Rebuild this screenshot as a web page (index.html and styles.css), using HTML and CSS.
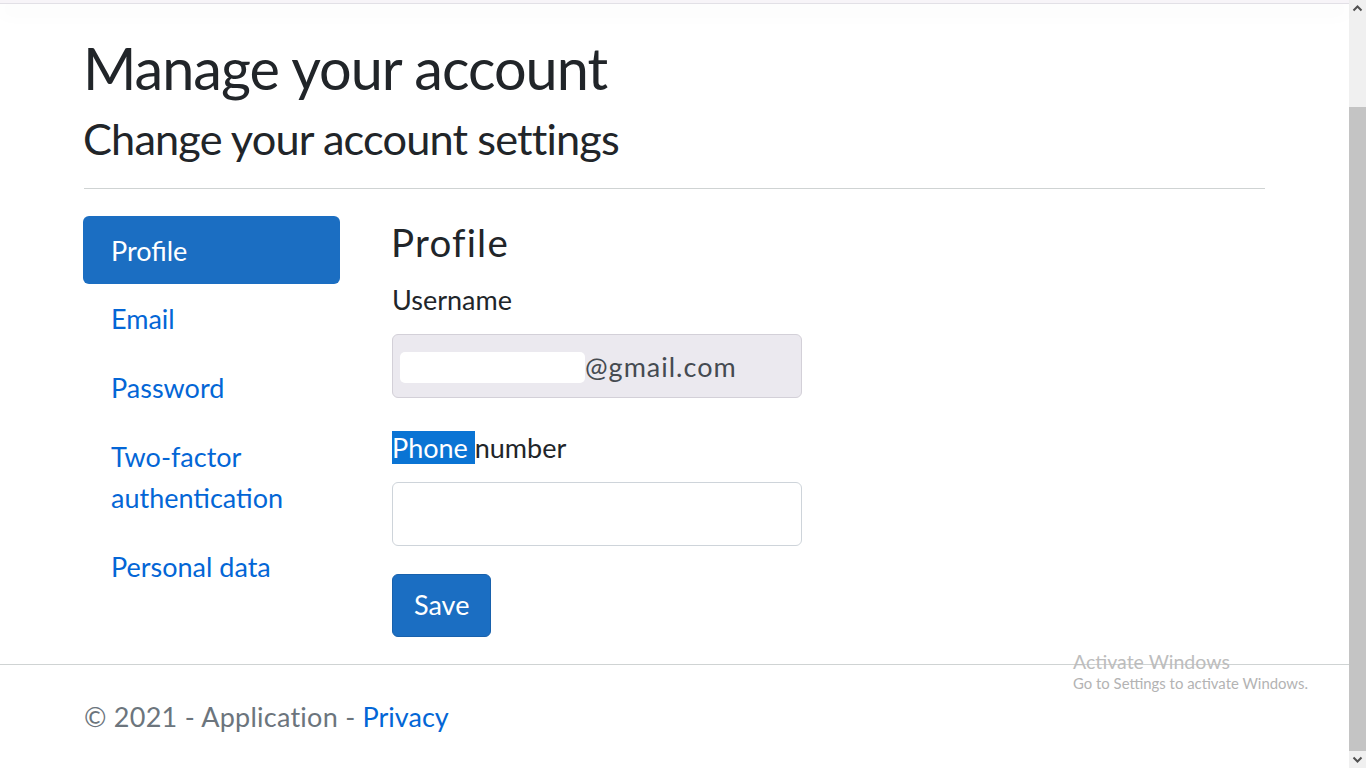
FILE: index.html
```html
<!DOCTYPE html>
<html lang="en">
<head>
<meta charset="utf-8">
<title>Manage your account</title>
<link rel="stylesheet" href="styles.css">
</head>
<body>
<div class="screen">
  <div class="page">
    <div class="nav-edge"></div>
    <main class="container">
      <h1 class="title">Manage your account</h1>
      <h3 class="subtitle">Change your account settings</h3>
      <hr class="rule">
      <div class="row">
        <nav class="side">
          <a class="pill active" href="#">Profile</a>
          <a class="pill" href="#">Email</a>
          <a class="pill" href="#">Password</a>
          <a class="pill" href="#">Two-factor authentication</a>
          <a class="pill" href="#">Personal data</a>
        </nav>
        <section class="content">
          <h4 class="section-title">Profile</h4>
          <form class="form">
            <div class="group">
              <label class="label">Username</label>
              <div class="input disabled"><span class="redact"></span><span class="value">@gmail.com</span></div>
            </div>
            <div class="group">
              <label class="label"><span class="sel">Phone </span>number</label>
              <div class="input"></div>
            </div>
            <button class="btn" type="button">Save</button>
          </form>
        </section>
      </div>
    </main>
    <footer class="footer">
      <div class="footer-inner">© 2021 - Application - <a class="footer-link" href="#">Privacy</a></div>
    </footer>
    <div class="watermark">
      <div class="wm-title">Activate Windows</div>
      <div class="wm-sub">Go to Settings to activate Windows.</div>
    </div>
  </div>
  <div class="scrollbar">
    <div class="sb-arrow">
      <svg width="17" height="17" viewBox="0 0 17 17"><polyline points="4.5,10.5 8.5,6.5 12.5,10.5" fill="none" stroke="#505050" stroke-width="2"/></svg>
    </div>
    <div class="sb-track"></div>
    <div class="sb-thumb"></div>
    <div class="sb-arrow">
      <svg width="17" height="17" viewBox="0 0 17 17"><polyline points="4.5,6.5 8.5,10.5 12.5,6.5" fill="none" stroke="#505050" stroke-width="2"/></svg>
    </div>
  </div>
</div>
</body>
</html>
```

FILE: styles.css
```css
* { box-sizing: border-box; }
html, body { margin: 0; padding: 0; }
body {
  font-family: Lato, "Open Sans", sans-serif;
  font-size: 27px;
  line-height: 1.5;
  color: #212529;
  background: #fff;
  width: 1366px;
  height: 768px;
  overflow: hidden;
}
.screen { display: flex; height: 768px; }
.page {
  width: 1349px;
  height: 768px;
  position: relative;
  display: flex;
  flex-direction: column;
}
.nav-edge {
  height: 4px;
  background: #f7f4f8;
  border-bottom: 1px solid #e2e0e6;
  box-shadow: 0 7px 20px rgba(40, 0, 40, 0.07);
}
.container { margin-left: 84px; width: 1181px; }
.title {
  font-size: 57.6px;
  line-height: 69px;
  font-weight: 400;
  letter-spacing: -1px;
  margin: 29px 0 0 -1px;
}
.subtitle {
  font-size: 43.3px;
  line-height: 52px;
  font-weight: 400;
  letter-spacing: -0.85px;
  margin: 10px 0 0 -1px;
}
.rule {
  margin: 24px 0 0;
  border: 0;
  border-top: 1px solid #cfd3d3;
  height: 0;
}
.row { display: flex; gap: 52px; margin-top: 27px; }
.side { width: 257px; margin-left: -1px; display: flex; flex-direction: column; }
.pill {
  display: block;
  padding: 14px 27px 14px 28px;
  line-height: 41px;
  color: #0366d6;
  text-decoration: none;
  border-radius: 6px;
}
.pill.active { background: #1b6ec2; color: #fff; height: 68px; }
.content { width: 410px; }
.section-title {
  font-size: 38.5px;
  line-height: 46px;
  font-weight: 400;
  letter-spacing: 1.2px;
  margin: 3px 0 15px -1px;
}
.group { margin-bottom: 30px; }
.label { display: block; line-height: 40.5px; margin-bottom: 13.5px; }
.sel { background: #0a74d4; color: #fff; }
.input {
  height: 64px;
  border: 1px solid #ced4da;
  border-radius: 6px;
  padding: 0 20px;
  display: flex;
  align-items: center;
  background: #fff;
}
.input.disabled { background: #ebe9ef; color: #454b51; border-color: #d3d0d8; }
.redact {
  width: 185px;
  height: 31px;
  margin-left: -13px;
  margin-top: 2px;
  background: #fff;
  border-radius: 5px;
  flex: none;
}
.value { line-height: 41px; letter-spacing: 1px; }
.btn {
  font: inherit;
  line-height: 40.5px;
  padding: 10px 21px;
  border: 1px solid #1861ac;
  background: #1b6ec2;
  color: #fff;
  border-radius: 6px;
  margin-top: -2px;
}
.footer {
  margin-top: auto;
  border-top: 1px solid #cfd3d3;
  height: 104px;
  line-height: 103px;
  color: #6c757d;
  white-space: nowrap;
}
.footer-inner { margin-left: 84px; letter-spacing: 0.25px; }
.footer-link { color: #0366d6; text-decoration: none; letter-spacing: 0; }
.watermark {
  position: absolute;
  left: 1073px;
  top: 650px;
  color: #bdbdbd;
  line-height: 1.2;
}
.wm-title { font-size: 19.5px; }
.wm-sub { font-size: 14.9px; margin-top: 2px; color: #b3b3b3; }
.scrollbar {
  width: 17px;
  height: 768px;
  display: flex;
  flex-direction: column;
  background: #f0f0f0;
}
.sb-arrow { height: 17px; flex: none; }
.sb-arrow svg { display: block; }
.sb-track { height: 90px; flex: none; }
.sb-thumb { flex: 1; background: #c4c4c4; }
```
